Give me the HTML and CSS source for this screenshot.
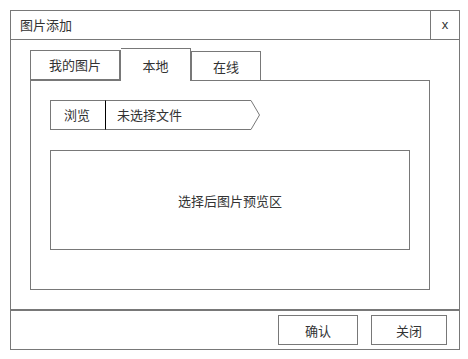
FILE: index.html
```html
<!DOCTYPE html>
<html lang="zh-CN">
<head>
    <meta charset="UTF-8">
    <meta name="viewport" content="width=device-width, initial-scale=1.0">
    <title>图片添加</title>
    <link rel="stylesheet" href="styles.css">
</head>
<body>
    <div class="dialog">
        <div class="dialog-head">
            <span class="dialog-title">图片添加</span>
            <button class="dialog-close">x</button>
        </div>

        <div class="dialog-body">
            <ul class="tabs">
                <li class="tab tab-mine">我的图片</li>
                <li class="tab tab-active">本地</li>
                <li class="tab tab-online">在线</li>
            </ul>

            <div class="tab-panel">
                <div class="file-field">
                    <span class="file-btn">浏览</span>
                    <span class="file-name">未选择文件</span>
                    <svg class="file-tip" width="10" height="30" viewBox="0 0 10 30">
                        <polyline points="0,0.5 8.5,15 0,29.5" fill="#fff" stroke="#787878" stroke-width="1"/>
                    </svg>
                </div>

                <div class="preview">选择后图片预览区</div>
            </div>
        </div>

        <div class="dialog-foot">
            <button class="btn btn-ok">确认</button>
            <button class="btn btn-close">关闭</button>
        </div>
    </div>
</body>
</html>
```

FILE: styles.css
```css
* {
    margin: 0;
    padding: 0;
    box-sizing: border-box;
}

body {
    font-family: "Noto Sans CJK SC", "Noto Sans", sans-serif;
    font-size: 13px;
    color: #333;
    background: #fff;
}

.dialog {
    margin: 10px 0 0 10px;
    width: 450px;
    height: 340px;
    border: 1px solid #787878;
    display: flex;
    flex-direction: column;
}

.dialog-head {
    display: flex;
    height: 29px;
    border-bottom: 1px solid #787878;
}

.dialog-title {
    flex: 1;
    padding-left: 9px;
    line-height: 28px;
}

.dialog-close {
    width: 29px;
    border: none;
    border-left: 1px solid #787878;
    background: #fff;
    font-family: "Liberation Sans", sans-serif;
    font-size: 13px;
    color: #333;
    padding-bottom: 1px;
}

.dialog-body {
    flex: 1;
    padding: 8px 29px 0 19px;
}

.tabs {
    display: flex;
    align-items: flex-end;
    list-style: none;
    height: 33px;
    margin-bottom: -1px;
    position: relative;
}

.tab {
    border: 1px solid #787878;
    background: #fff;
    text-align: center;
    width: 70px;
}

.tab-mine {
    width: 91px;
    height: 31px;
    border-right-width: 2px;
    border-bottom-width: 2px;
    line-height: 28px;
}

.tab-active {
    height: 33px;
    border-bottom: none;
    border-left: none;
    width: 70px;
    line-height: 33px;
}

.tab-online {
    height: 30px;
    line-height: 29px;
}

.tab-panel {
    height: 210px;
    border: 1px solid #787878;
    padding: 19px 19px 0 19px;
}

.file-field {
    display: flex;
    height: 30px;
}

.file-btn {
    width: 56px;
    border: 1px solid #787878;
    border-right: 1px solid #000;
    padding-left: 13px;
    line-height: 28px;
}

.file-name {
    width: 145px;
    border-top: 1px solid #787878;
    border-bottom: 1px solid #787878;
    padding-left: 11px;
    line-height: 28px;
}

.file-tip {
    display: block;
}

.preview {
    margin-top: 20px;
    width: 360px;
    height: 100px;
    border: 1px solid #787878;
    display: flex;
    align-items: center;
    justify-content: center;
}

.dialog-foot {
    height: 40px;
    border-top: 2px solid #787878;
    display: flex;
    justify-content: flex-end;
    align-items: center;
    gap: 13px;
    padding: 0 12px 0 0;
}

.btn {
    height: 30px;
    border: 1px solid #787878;
    background: #fff;
    font-family: inherit;
    font-size: 13px;
    color: #333;
}

.btn-ok {
    width: 80px;
}

.btn-close {
    width: 76px;
}
```
